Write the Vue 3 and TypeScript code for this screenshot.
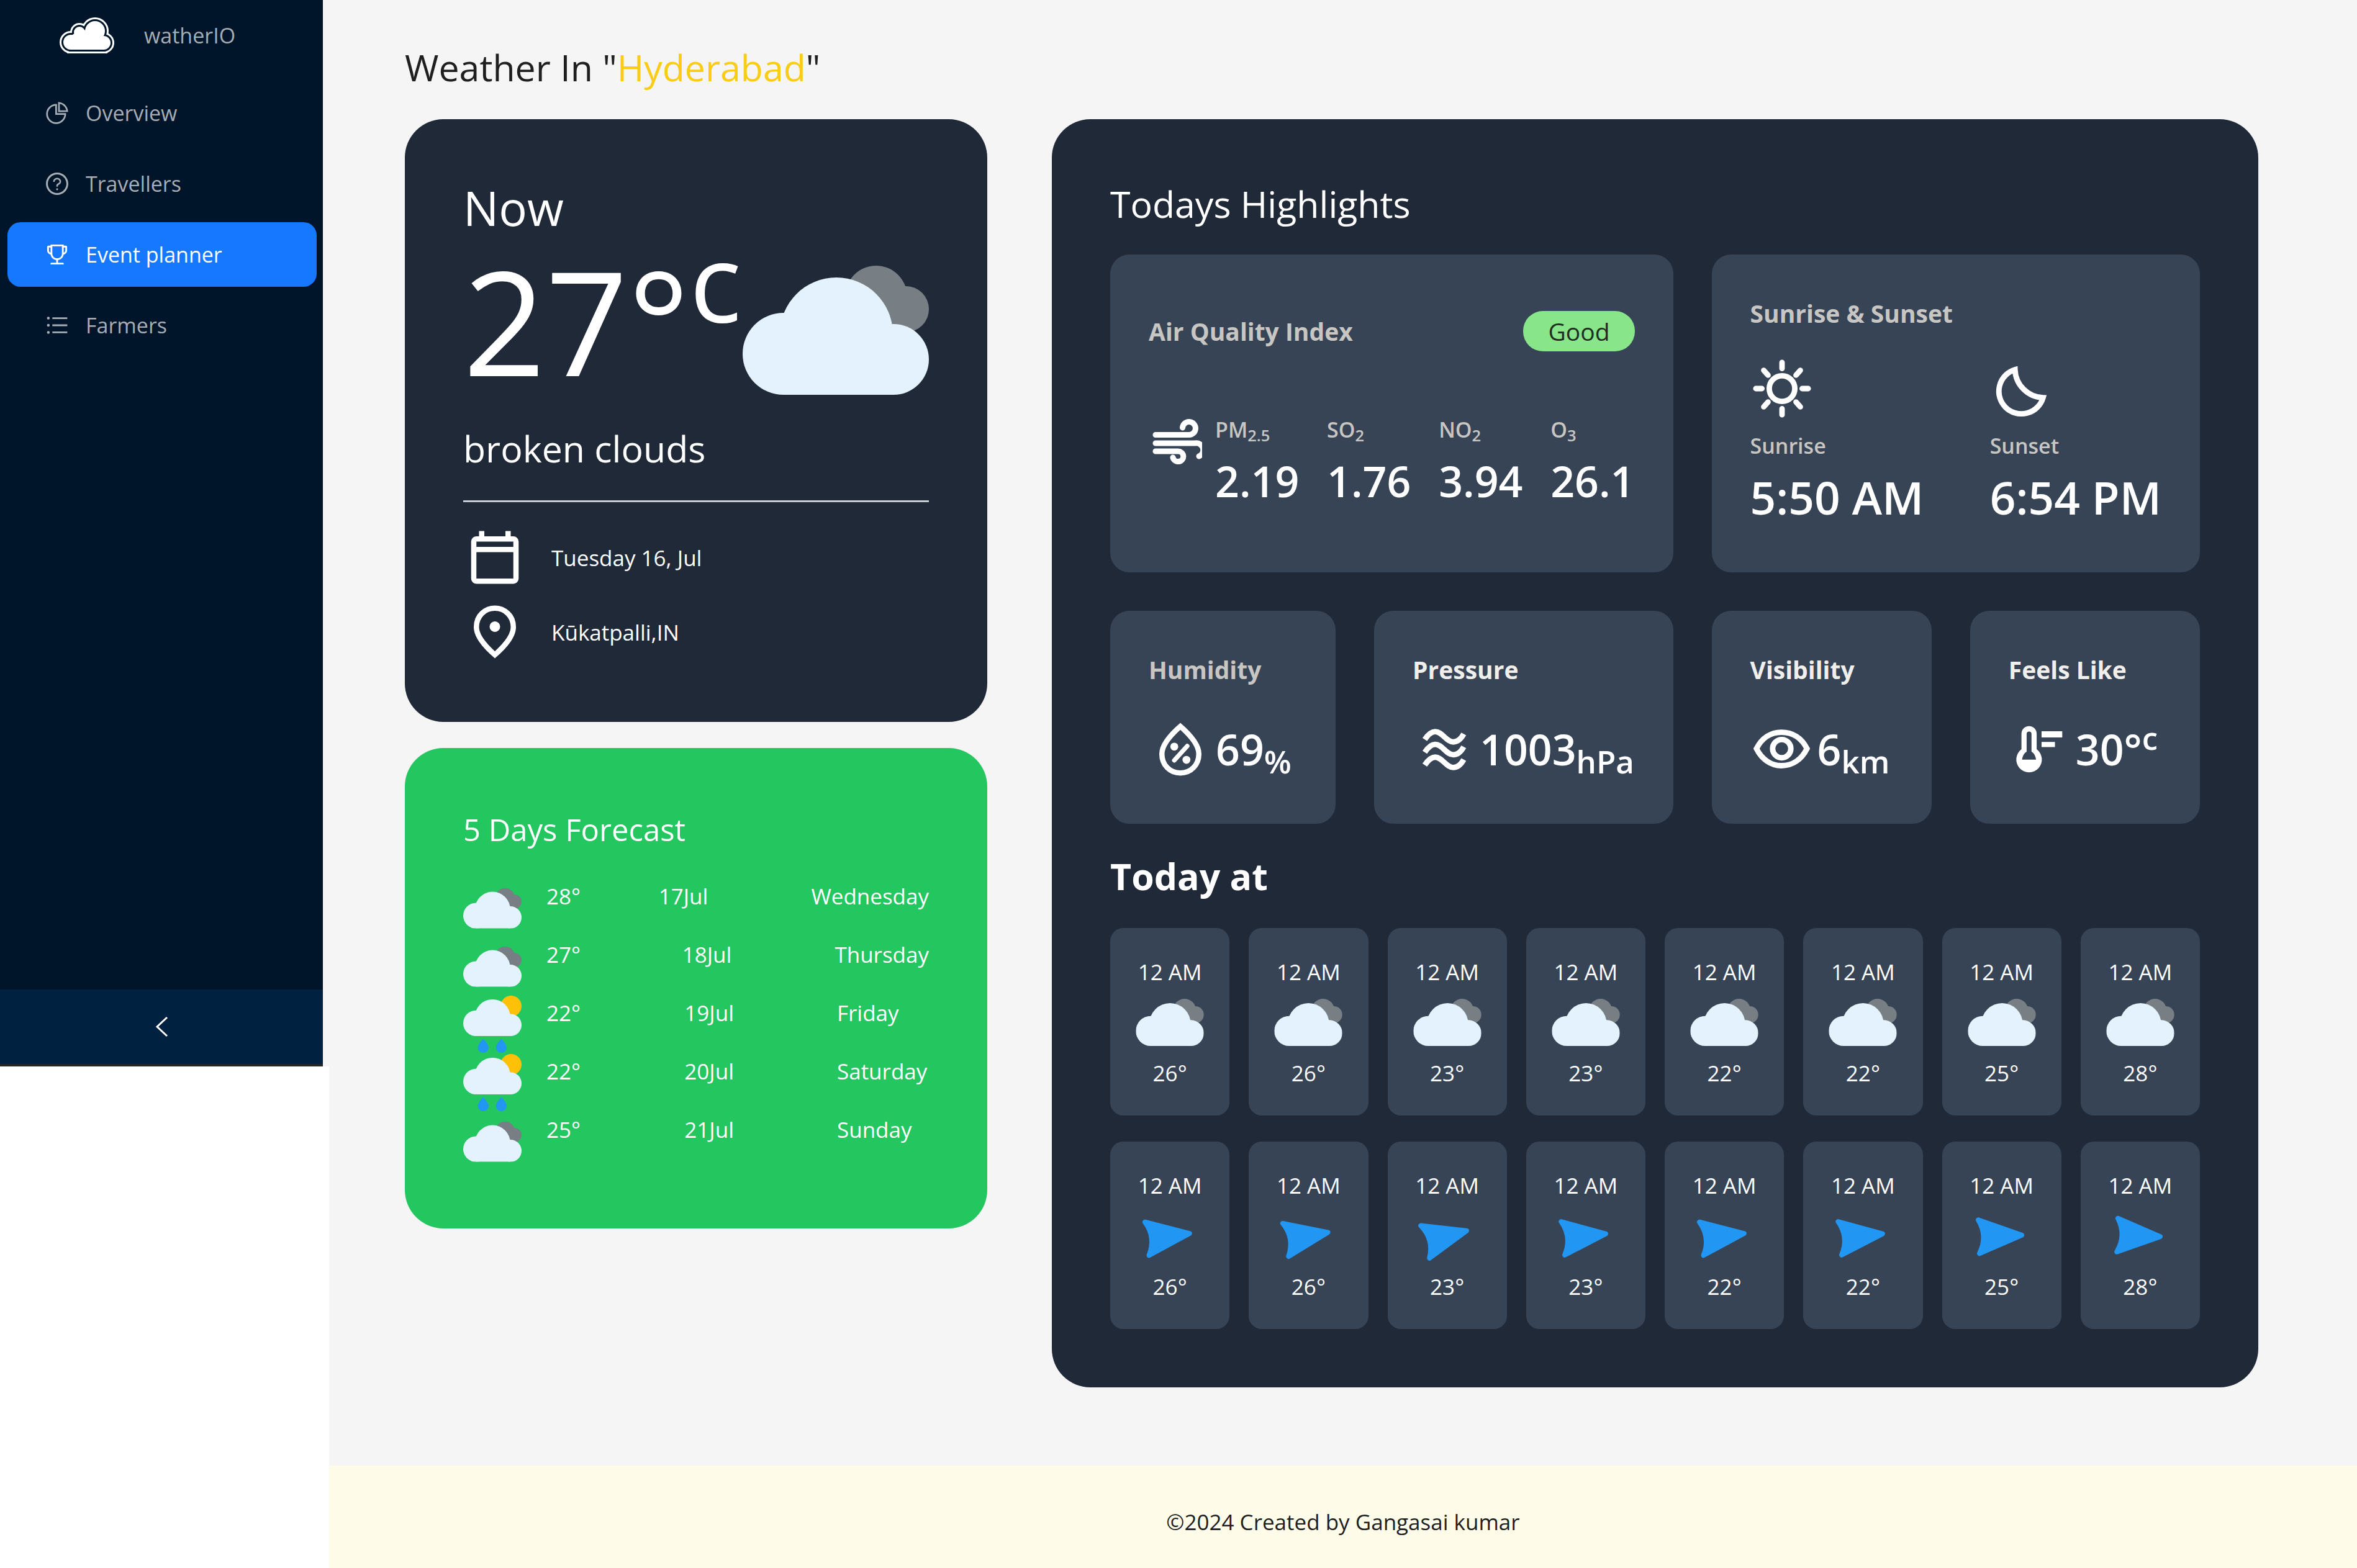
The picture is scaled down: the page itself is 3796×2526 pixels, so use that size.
<script setup lang="ts">
interface NavItem {
  label: string
  icon: 'pie' | 'question' | 'trophy' | 'list'
  active?: boolean
}
interface Forecast {
  kind: 'clouds' | 'rain'
  temp: number
  date: string
  day: string
}
interface Hour {
  time: string
  temp: number
  windAngle: number
}

const navItems: NavItem[] = [
  { label: 'Overview', icon: 'pie' },
  { label: 'Travellers', icon: 'question' },
  { label: 'Event planner', icon: 'trophy', active: true },
  { label: 'Farmers', icon: 'list' },
]

const forecast: Forecast[] = [
  { kind: 'clouds', temp: 28, date: '17Jul', day: 'Wednesday' },
  { kind: 'clouds', temp: 27, date: '18Jul', day: 'Thursday' },
  { kind: 'rain', temp: 22, date: '19Jul', day: 'Friday' },
  { kind: 'rain', temp: 22, date: '20Jul', day: 'Saturday' },
  { kind: 'clouds', temp: 25, date: '21Jul', day: 'Sunday' },
]

const pollutants = [
  { name: 'PM', index: '2.5', value: '2.19' },
  { name: 'SO', index: '2', value: '1.76' },
  { name: 'NO', index: '2', value: '3.94' },
  { name: 'O', index: '3', value: '26.1' },
]

const hours: Hour[] = [
  { time: '12 AM', temp: 26, windAngle: -7 },
  { time: '12 AM', temp: 26, windAngle: -10 },
  { time: '12 AM', temp: 23, windAngle: -15 },
  { time: '12 AM', temp: 23, windAngle: -6 },
  { time: '12 AM', temp: 22, windAngle: -7 },
  { time: '12 AM', temp: 22, windAngle: -6 },
  { time: '12 AM', temp: 25, windAngle: -2 },
  { time: '12 AM', temp: 28, windAngle: 2 },
]

// Successive layers of the brand cloud: white rim, dark gap, white core.
const logoLayers = [
  { color: '#ffffff', width: 12 },
  { color: '#001529', width: 6 },
  { color: '#ffffff', width: 0 },
]
</script>

<template>
  <div class="layout">
    <!-- Shapes shared by the weather pictures -->
    <svg class="defs" aria-hidden="true">
      <symbol id="cloud-front" viewBox="0 0 300 208">
        <circle cx="151" cy="110" r="91" />
        <circle cx="66" cy="142" r="66" />
        <circle cx="243" cy="151" r="57" />
        <rect x="66" y="130" width="177" height="78" />
      </symbol>
      <symbol id="clouds" viewBox="0 0 300 208">
        <circle cx="215" cy="50" r="50" fill="#787f84" />
        <circle cx="263" cy="70" r="37" fill="#787f84" />
        <use href="#cloud-front" width="300" height="208" fill="#e3f2fd" />
      </symbol>
      <symbol id="rain" viewBox="0 0 300 294">
        <circle cx="246" cy="54" r="54" fill="#ffc107" />
        <use href="#cloud-front" width="300" height="208" fill="#e3f2fd" />
        <path
          d="M103 221C103 221 131 250 131 267A28 27 0 0 1 75 267C75 250 103 221 103 221ZM196 221C196 221 224 250 224 267A28 27 0 0 1 168 267C168 250 196 221 196 221Z"
          fill="#2196f3"
        />
      </symbol>
    </svg>

    <aside class="sider">
      <nav class="menu">
        <a class="brand" href="#">
          <svg class="logo" viewBox="0 0 88 58" aria-hidden="true">
            <g
              v-for="(layer, i) in logoLayers"
              :key="i"
              :fill="layer.color"
              :stroke="layer.color"
              :stroke-width="layer.width"
            >
              <circle cx="57" cy="22" r="16" />
              <circle cx="32" cy="24" r="9" />
              <circle cx="18" cy="40" r="12" />
              <circle cx="71" cy="41" r="11" />
              <path d="M18 30L32 20L57 22L71 32V52H18Z" />
            </g>
          </svg>
          <span>watherIO</span>
        </a>
        <a
          v-for="item in navItems"
          :key="item.label"
          class="menu-item"
          :class="{ active: item.active }"
          href="#"
        >
          <svg class="menu-icon" viewBox="64 64 896 896" aria-hidden="true">
            <path
              v-if="item.icon === 'pie'"
              d="M864 518H506V160c0-4.400-3.600-8-8-8h-26a398.460 398.460 0 00-282.800 117.100 398.190 398.190 0 00-85.700 127.100A397.610 397.610 0 0072 552a398.460 398.460 0 00117.100 282.800c36.700 36.700 79.500 65.600 127.100 85.700A397.610 397.610 0 00472 952a398.460 398.460 0 00282.800-117.100c36.700-36.700 65.600-79.500 85.700-127.100A397.610 397.610 0 00872 552v-26c0-4.400-3.600-8-8-8zM705.700 787.800A331.590 331.590 0 01470.400 884c-88.100-.4-170.900-34.900-233.200-97.200C174.500 724.100 140 640.700 140 552c0-88.700 34.500-172.100 97.200-234.800 54.600-54.600 124.900-87.900 200.800-95.500V586h364.300c-7.700 76.300-41.300 147-96.600 201.800zM952 462.400l-2.600-28.200c-8.500-92.100-49.400-179-115.200-244.600A399.400 399.400 0 00589 74.600L560.700 72c-4.700-.4-8.700 3.200-8.700 7.900V464c0 4.400 3.600 8 8 8l384-1c4.700 0 8.400-4 8-8.600zm-332.200-58.200V147.600a332.240 332.240 0 01166.400 89.800c45.700 45.600 77 103.600 90 166.100l-256.400.7z"
            />
            <template v-else-if="item.icon === 'question'">
              <path
                d="M512 64C264.600 64 64 264.600 64 512s200.600 448 448 448 448-200.600 448-448S759.400 64 512 64zm0 820c-205.400 0-372-166.600-372-372s166.600-372 372-372 372 166.600 372 372-166.600 372-372 372z"
              />
              <path
                d="M623.600 316.700C593.600 290.400 554 276 512 276s-81.600 14.500-111.600 40.700C369.200 344 352 380.700 352 420v7.600c0 4.400 3.600 8 8 8h48c4.400 0 8-3.600 8-8V420c0-44.100 43.100-80 96-80s96 35.900 96 80c0 31.100-22 59.600-56.100 72.700-21.200 8.100-39.200 22.300-52.100 40.900-13.100 19-19.900 41.800-19.900 64.900V620c0 4.400 3.600 8 8 8h48c4.400 0 8-3.600 8-8v-22.700a48.300 48.300 0 0130.900-44.800c59-22.700 97.100-74.700 97.100-132.500.1-39.300-17.100-76-48.300-103.300zM472 732a40 40 0 1080 0 40 40 0 10-80 0z"
              />
            </template>
            <path
              v-else-if="item.icon === 'trophy'"
              d="M868 160h-92v-40c0-4.400-3.600-8-8-8H256c-4.400 0-8 3.600-8 8v40h-92a44 44 0 00-44 44v148c0 81.700 60 149.600 138.200 162C265.700 630.200 359 721.700 476 734.500v105.200H280c-17.700 0-32 14.300-32 32V904c0 4.400 3.600 8 8 8h512c4.400 0 8-3.600 8-8v-32.300c0-17.700-14.300-32-32-32H548V734.500C665 721.700 758.300 630.200 773.800 514 852 501.600 912 433.700 912 352V204a44 44 0 00-44-44zM184 352V232h64v207.600a91.990 91.990 0 01-64-87.600zm520 128c0 49.100-19.100 95.400-53.900 130.100-34.800 34.800-81 53.900-130.100 53.900h-16c-49.100 0-95.400-19.100-130.100-53.900-34.800-34.800-53.900-81-53.900-130.100V184h384v296zm136-128c0 41-26.900 75.800-64 87.600V232h64v120z"
            />
            <path
              v-else
              d="M320 192h600v72H320zM320 476h600v72H320zM320 760h600v72H320zM104 228a56 56 0 10112 0 56 56 0 10-112 0zM104 512a56 56 0 10112 0 56 56 0 10-112 0zM104 796a56 56 0 10112 0 56 56 0 10-112 0z"
            />
          </svg>
          <span>{{ item.label }}</span>
        </a>
      </nav>
      <button class="trigger" type="button" aria-label="Collapse menu">
        <svg class="chevron" viewBox="0 0 22 34" aria-hidden="true">
          <path d="M20 2L4 17L20 32" fill="none" stroke="#fff" stroke-width="3" />
        </svg>
      </button>
    </aside>

    <div class="page">
      <main class="content">
        <h1 class="heading">Weather In "<span class="city">Hyderabad</span>"</h1>

        <div class="columns">
          <div class="side">
            <section class="card now">
              <h2 class="now-title">Now</h2>
              <div class="now-row">
                <p class="now-temp">27°<sup>c</sup></p>
                <svg class="now-cloud" viewBox="0 0 300 208" aria-hidden="true">
                  <use href="#clouds" width="300" height="208" />
                </svg>
              </div>
              <p class="now-desc">broken clouds</p>
              <ul class="facts">
                <li>
                  <svg class="icon" viewBox="0 0 24 24" aria-hidden="true">
                    <path
                      d="M5 22q-.825 0-1.412-.587T3 20V6q0-.825.588-1.412T5 4h1V2h2v2h8V2h2v2h1q.825 0 1.413.588T21 6v14q0 .825-.587 1.413T19 22zm0-2h14V10H5zM5 8h14V6H5z"
                    />
                  </svg>
                  <span>Tuesday 16, Jul</span>
                </li>
                <li>
                  <svg class="icon" viewBox="0 0 24 24" aria-hidden="true">
                    <path
                      d="M12 12q.825 0 1.412-.587T14 10t-.587-1.412T12 8t-1.412.588T10 10t.588 1.413T12 12m0 7.350q3.050-2.800 4.525-5.087T18 10.200q0-2.725-1.737-4.462T12 4T7.738 5.738T6 10.200q0 1.775 1.475 4.063T12 19.350M12 22q-4.025-3.425-6.012-6.362T4 10.200q0-3.750 2.413-5.975T12 2t5.588 2.225T20 10.200q0 2.500-1.987 5.438T12 22"
                    />
                  </svg>
                  <span>Kūkatpalli,IN</span>
                </li>
              </ul>
            </section>

            <section class="card five-days">
              <h2 class="five-title">5 Days Forecast</h2>
              <ul class="days">
                <li v-for="row in forecast" :key="row.date">
                  <svg class="day-icon" viewBox="0 0 300 300" aria-hidden="true">
                    <use v-if="row.kind === 'clouds'" href="#clouds" y="50" width="300" height="208" />
                    <use v-else href="#rain" y="3" width="300" height="294" />
                  </svg>
                  <span class="day-temp">{{ row.temp }}°</span>
                  <span class="day-date">{{ row.date }}</span>
                  <span class="day-name">{{ row.day }}</span>
                </li>
              </ul>
            </section>
          </div>

          <section class="card highlights">
            <h2 class="panel-title">Todays Highlights</h2>

            <div class="tiles">
              <article class="tile air">
                <header class="air-head">
                  <h3 class="tile-title muted">Air Quality Index</h3>
                  <span class="badge">Good</span>
                </header>
                <div class="air-body">
                  <svg class="wind" viewBox="0 0 80 73" aria-hidden="true">
                    <g fill="none" stroke="#fff" stroke-width="9" stroke-linecap="round">
                      <path d="M5 25.500H59A10.500 10.500 0 1 0 48.500 14" />
                      <path d="M5 39H69A11 11 0 0 1 75 60" />
                      <path d="M5 52H41A8.500 8.300 0 1 1 33 62" />
                    </g>
                  </svg>
                  <dl class="pollutants">
                    <div v-for="p in pollutants" :key="p.name">
                      <dt class="label">{{ p.name }}<sub>{{ p.index }}</sub></dt>
                      <dd class="value">{{ p.value }}</dd>
                    </div>
                  </dl>
                </div>
              </article>

              <article class="tile">
                <h3 class="tile-title muted">Sunrise &amp; Sunset</h3>
                <div class="suns">
                  <div>
                    <svg class="icon" viewBox="0 0 104 104" aria-hidden="true">
                      <circle cx="52" cy="52" r="21" fill="none" stroke="#fff" stroke-width="9" />
                      <path
                        d="M52 9V19M52 85V95M9 52H19M85 52H95M22 22L29 30M82 22L75 30M22 82L29 74M82 82L75 74"
                        stroke="#fff"
                        stroke-width="9"
                        stroke-linecap="round"
                      />
                    </svg>
                    <p class="label">Sunrise</p>
                    <p class="value clock">5:50 AM</p>
                  </div>
                  <div>
                    <svg class="icon" viewBox="-10 -14 104 104" aria-hidden="true">
                      <path
                        d="M31 7A37 37 0 1 0 77 53A48 48 0 0 1 31 7Z"
                        fill="none"
                        stroke="#fff"
                        stroke-width="9"
                      />
                    </svg>
                    <p class="label">Sunset</p>
                    <p class="value clock">6:54 PM</p>
                  </div>
                </div>
              </article>

              <div class="pair pair-left">
                <article class="tile">
                  <h3 class="tile-title muted">Humidity</h3>
                  <div class="metric">
                    <svg class="icon" viewBox="0 0 24 24" aria-hidden="true">
                      <path
                        d="M12 22q-3.425 0-5.712-2.350T4 13.800q0-2.500 1.988-5.437T12 2q4.025 3.425 6.013 6.363T20 13.800q0 3.500-2.287 5.850T12 22m0-2q2.600 0 4.300-1.763T18 13.800q0-1.825-1.513-4.125T12 4.650Q9.025 7.375 7.513 9.675T6 13.800q0 2.675 1.700 4.438T12 20"
                      />
                      <circle cx="9.700" cy="11" r="1.500" />
                      <circle cx="14.300" cy="16" r="1.500" />
                      <path d="M9.700 16.200L14.600 10.800" stroke="#fff" stroke-width="1.700" stroke-linecap="round" />
                    </svg>
                    <p class="value">69<sub>%</sub></p>
                  </div>
                </article>
                <article class="tile">
                  <h3 class="tile-title">Pressure</h3>
                  <div class="metric">
                    <svg class="icon" viewBox="-17 -18 104 104" aria-hidden="true">
                      <g fill="none" stroke="#fff" stroke-width="9">
                        <path d="M3 18C9 9 14 5 20 5C32 5 38 22 50 22C57 22 62 18 67 9" />
                        <path d="M3 39C9 30 14 26 20 26C32 26 38 43 50 43C57 43 62 39 67 30" />
                        <path d="M3 60C9 51 14 47 20 47C32 47 38 64 50 64C57 64 62 60 67 51" />
                      </g>
                    </svg>
                    <p class="value">1003<sub>hPa</sub></p>
                  </div>
                </article>
              </div>

              <div class="pair pair-right">
                <article class="tile">
                  <h3 class="tile-title">Visibility</h3>
                  <div class="metric">
                    <svg class="icon" viewBox="-5 -19 104 104" aria-hidden="true">
                      <g fill="none" stroke="#fff" stroke-width="9">
                        <path
                          d="M5 32C14 14 29 5 46 5C64 5 79 14 88 32C79 50 64 60 46 60C29 60 14 50 5 32Z"
                        />
                        <circle cx="46.500" cy="32" r="15" />
                      </g>
                    </svg>
                    <p class="value">6<sub>km</sub></p>
                  </div>
                </article>
                <article class="tile">
                  <h3 class="tile-title">Feels Like</h3>
                  <div class="metric">
                    <svg class="icon" viewBox="-13 -14 104 104" aria-hidden="true">
                      <path
                        fill-rule="evenodd"
                        d="M20.500 0A12.500 12.500 0 0 1 33 12.500V38A21 21 0 1 1 8 38V12.500A12.500 12.500 0 0 1 20.500 0ZM16.500 13V42C13 44 10 48 9 55H32C31 48 28 44 24.500 42V13A4 4 0 0 0 16.500 13Z"
                      />
                      <path d="M41 8.500H75V18.500H41ZM41 26H63V34.500H41Z" />
                    </svg>
                    <p class="value">30°<sup>c</sup></p>
                  </div>
                </article>
              </div>
            </div>

            <h2 class="today-title">Today at</h2>
            <div class="hours">
              <article v-for="(hour, i) in hours" :key="'t' + i" class="hour">
                <p>{{ hour.time }}</p>
                <div class="hour-pic">
                  <svg class="hour-cloud" viewBox="0 0 300 208" aria-hidden="true">
                    <use href="#clouds" width="300" height="208" />
                  </svg>
                </div>
                <p>{{ hour.temp }}°</p>
              </article>
              <article v-for="(hour, i) in hours" :key="'w' + i" class="hour">
                <p>{{ hour.time }}</p>
                <div class="hour-pic">
                  <svg
                    class="arrow"
                    viewBox="-48 -48 96 96"
                    aria-hidden="true"
                    :style="{ transform: `rotate(${hour.windAngle}deg)` }"
                  >
                    <path
                      d="M-37 -27L32 0L-37 27Q-22 0 -37 -27Z"
                      fill="#2196f3"
                      stroke="#2196f3"
                      stroke-width="8"
                      stroke-linejoin="round"
                    />
                  </svg>
                </div>
                <p>{{ hour.temp }}°</p>
              </article>
            </div>
          </section>
        </div>
      </main>
      <footer class="footer">©2024 Created by Gangasai kumar</footer>
    </div>
  </div>
</template>

<style>
body {
  margin: 0;
  background: #ffffff;
}
</style>

<style scoped>
.layout {
  display: flex;
  align-items: flex-start;
  font-family: 'Open Sans', 'Noto Sans', sans-serif;
  font-size: 35px;
  line-height: 57px;
  color: #1f1f1f;
}
.defs {
  position: absolute;
  width: 0;
  height: 0;
}
h1,
h2,
h3,
p,
ul,
dl,
dd {
  margin: 0;
  padding: 0;
  font-weight: 400;
}
li {
  list-style: none;
}
svg {
  display: block;
  flex: none;
}

/* Sidebar */
.sider {
  box-sizing: border-box;
  flex: none;
  display: flex;
  flex-direction: column;
  width: 530px;
  height: 68vh;
  border-right: 10px solid #f5f5f5;
  background: #001529;
  font-size: 34px;
}
.menu {
  flex: 1;
  display: flex;
  flex-direction: column;
  gap: 10px;
  padding: 0 10px 0 12px;
}
.brand,
.menu-item {
  display: flex;
  align-items: center;
  height: 104px;
  color: #a6adb4;
  text-decoration: none;
}
.brand {
  gap: 48px;
  margin-bottom: 6px;
  padding: 5px 0 5px 84px;
}
.logo {
  width: 88px;
  height: 58px;
}
.menu-item {
  gap: 28px;
  padding-left: 62px;
  border-radius: 21px;
}
.menu-item.active {
  background: #1677ff;
  color: #ffffff;
}
.menu-icon {
  width: 36px;
  height: 36px;
  fill: currentColor;
}
.trigger {
  display: flex;
  align-items: center;
  justify-content: center;
  height: 124px;
  border: 0;
  border-bottom: 4px solid #262626;
  background: #002140;
}
.chevron {
  width: 22px;
  height: 34px;
}

/* Page */
.page {
  flex: 1;
  min-width: 0;
  min-height: 100vh;
  display: flex;
  flex-direction: column;
  background: #f5f5f5;
}
.content {
  flex: 1;
  padding: 66px 159px 0 122px;
}
.heading {
  margin-bottom: 42px;
  font-size: 59px;
  line-height: 84px;
}
.city {
  color: #facc15;
}
.columns {
  display: grid;
  grid-template-columns: minmax(0, 938fr) minmax(0, 1943fr);
  align-items: start;
  gap: 104px;
}
.side {
  display: flex;
  flex-direction: column;
  gap: 42px;
}
.card {
  padding: 94px;
  border-radius: 62px;
  color: #ffffff;
}
.now,
.highlights {
  background: #202938;
}
.icon {
  width: 102px;
  height: 102px;
  fill: #ffffff;
}

/* Current weather */
.now-title {
  font-size: 76px;
  line-height: 98px;
}
.now-row {
  display: flex;
  justify-content: space-between;
  height: 296px;
}
.now-temp {
  font-size: 232px;
  line-height: 264px;
  white-space: nowrap;
}
sup,
sub {
  font-size: 75%;
  line-height: 0;
}
sup {
  vertical-align: 0.5em;
}
sub {
  vertical-align: -0.25em;
}
.now-cloud {
  align-self: center;
  width: 300px;
  height: 208px;
}
.now-desc {
  padding-bottom: 42px;
  border-bottom: 3px solid #c9cbd3;
  font-size: 59px;
  line-height: 84px;
}
.facts {
  display: flex;
  flex-direction: column;
  gap: 18px;
  padding-top: 38px;
}
.facts li {
  display: flex;
  align-items: center;
  gap: 40px;
}

/* Five-day forecast */
.five-days {
  background: #24c65f;
}
.five-title {
  margin-bottom: 42px;
  font-size: 49px;
  line-height: 74px;
}
.days li {
  display: flex;
  align-items: flex-start;
  height: 94px;
}
.day-icon {
  width: 94px;
  height: 94px;
}
.day-temp {
  margin-left: 40px;
}
.day-date {
  margin-left: auto;
}
.day-name {
  min-width: 148px;
  margin-left: 166px;
}

/* Highlights */
.panel-title {
  margin-bottom: 40px;
  font-size: 59px;
  line-height: 84px;
}
.tiles {
  display: grid;
  grid-template-columns: minmax(0, 906fr) minmax(0, 786fr);
  grid-template-rows: minmax(512px, auto) minmax(343px, auto);
  gap: 62px;
}
.tile {
  padding: 62px;
  border-radius: 31px;
  background: #364456;
}
.pair {
  display: grid;
  gap: 62px;
}
.pair-left {
  grid-template-columns: minmax(0, 362fr) minmax(0, 480fr);
}
.pair-right {
  grid-template-columns: minmax(0, 354fr) minmax(0, 370fr);
}
.tile-title {
  font-size: 39px;
  font-weight: 700;
  line-height: 65px;
  color: #f0efec;
  white-space: nowrap;
}
.muted,
.label {
  color: #c8c6c3;
}
.air {
  padding-top: 91px;
}
.air-head {
  display: flex;
  align-items: center;
  justify-content: space-between;
}
.badge {
  padding: 0 40px;
  border-radius: 32px;
  background: #89e589;
  color: #1d3020;
  font-size: 39px;
  line-height: 65px;
}
.air-body {
  display: flex;
  align-items: flex-start;
  margin-top: 98px;
}
.wind {
  width: 80px;
  height: 73px;
  margin: 11px 21px 0 6px;
}
.pollutants {
  flex: 1;
  display: flex;
  justify-content: space-between;
}
.label {
  font-size: 34px;
  font-weight: 600;
  line-height: 57px;
}
.value {
  font-size: 68px;
  font-weight: 600;
  line-height: 108px;
  white-space: nowrap;
}
.clock {
  font-size: 73px;
}
.suns {
  display: flex;
  justify-content: space-between;
  margin-top: 38px;
}
.suns .label {
  margin-top: 13px;
}
.metric {
  display: flex;
  align-items: center;
  gap: 6px;
  margin-top: 42px;
}

/* Hourly */
.today-title {
  margin: 42px 0;
  font-size: 59px;
  font-weight: 700;
  line-height: 84px;
}
.hours {
  display: grid;
  grid-template-columns: repeat(8, minmax(0, 1fr));
  gap: 42px 31px;
}
.hour {
  padding: 42px 0 40px;
  border-radius: 21px;
  background: #364456;
  text-align: center;
}
.hour-pic {
  display: flex;
  align-items: center;
  justify-content: center;
  height: 106px;
}
.hour-cloud {
  width: 110px;
  height: 76px;
}
.arrow {
  width: 96px;
  height: 96px;
}

.footer {
  padding: 62px 0 46px;
  background: #fefce8;
  text-align: center;
}
</style>
